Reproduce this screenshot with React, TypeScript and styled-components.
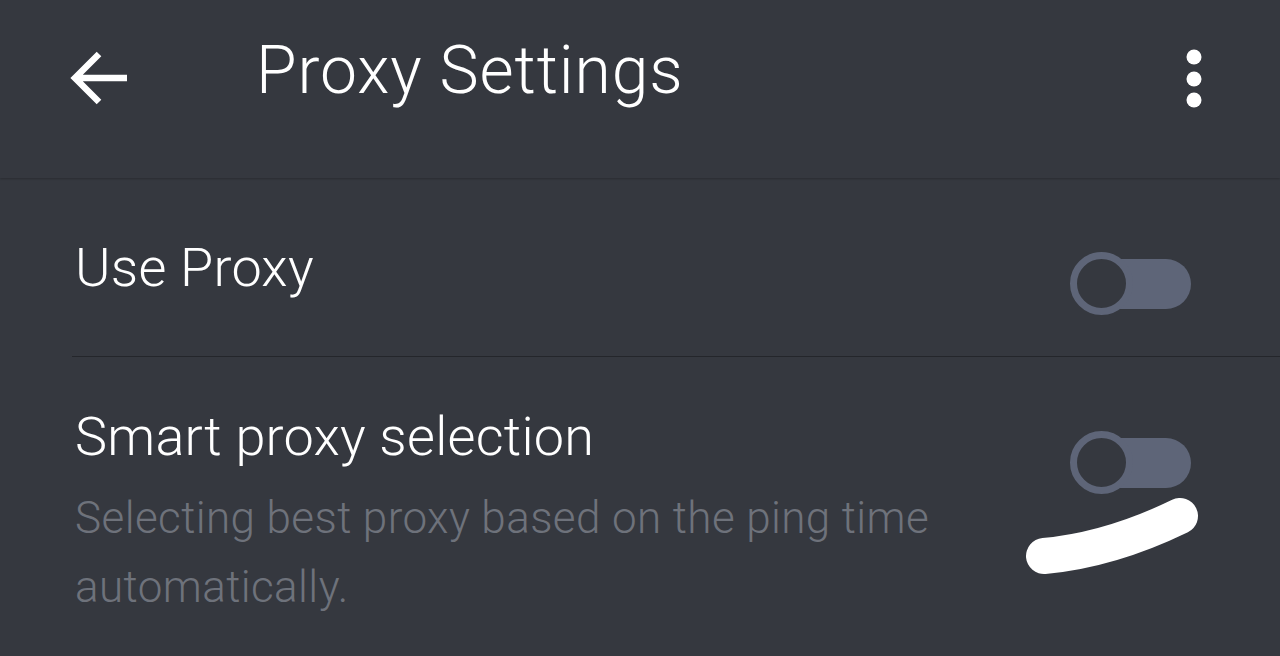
import React from "react";
import styled, { createGlobalStyle } from "styled-components";

const Global = createGlobalStyle`
  html, body { margin: 0; padding: 0; background: #35383f; overflow: hidden; }
  * { box-sizing: border-box; }
`;

const Page = styled.div`
  position: relative;
  width: 1280px;
  height: 656px;
  background: #35383f;
  font-family: Roboto, "Noto Sans", sans-serif;
  color: #ffffff;
  overflow: hidden;
`;

const Header = styled.header`
  height: 178px;
  display: flex;
  align-items: flex-start;
  padding: 0 76px 0 68px;
  box-shadow: 0 1px 2px rgba(0, 0, 0, 0.22);
  position: relative;
  z-index: 1;
`;

const IconButton = styled.div<{ $top: number }>`
  margin-top: ${(p) => p.$top}px;
  display: flex;
  align-items: center;
  justify-content: center;
`;

const Title = styled.h1`
  margin: 31px 0 0 124px;
  font-size: 66px;
  line-height: 80px;
  font-weight: 300;
  flex: 1;
  letter-spacing: 0.9px;
`;

const Row = styled.div<{ $top: number; $bottom: number; $divider?: boolean }>`
  margin-left: 72px;
  padding: ${(p) => p.$top}px 89px ${(p) => p.$bottom}px 3px;
  display: flex;
  align-items: flex-start;
  border-bottom: ${(p) => (p.$divider ? "1px solid #24262b" : "none")};
`;

const TextCol = styled.div`
  flex: 1;
  max-width: 920px;
`;

const RowTitle = styled.div`
  font-size: 54px;
  line-height: 64px;
  font-weight: 300;
  letter-spacing: 0.25px;
  color: #ffffff;
`;

const RowSub = styled.div`
  margin-top: 15px;
  font-size: 44px;
  line-height: 69px;
  font-weight: 300;
  letter-spacing: 0.4px;
  color: #6e727b;
`;

const ToggleWrap = styled.div<{ $top: number }>`
  margin-left: auto;
  margin-top: ${(p) => p.$top}px;
  position: relative;
  width: 121px;
  height: 63px;
`;

const Track = styled.div`
  position: absolute;
  left: 20px;
  right: 0;
  top: 6.5px;
  height: 50px;
  border-radius: 25px;
  background: #5e6578;
`;

const Thumb = styled.div`
  position: absolute;
  left: 0;
  top: 0;
  width: 63px;
  height: 63px;
  border-radius: 50%;
  border: 7px solid #5e6578;
  background: #35383f;
`;

const Scribble = styled.svg`
  position: absolute;
  left: 0;
  top: 0;
  pointer-events: none;
`;

const Toggle = ({ top }: { top: number }) => (
  <ToggleWrap $top={top}>
    <Track />
    <Thumb />
  </ToggleWrap>
);

export default function App() {
  return (
    <Page>
      <Global />
      <Header>
        <IconButton $top={46}>
          <svg width="64" height="64" viewBox="0 0 64 64">
            <path
              d="M59 32 H7 M31 8 L7 32 L31 56"
              fill="none"
              stroke="#ffffff"
              strokeWidth="6.5"
              strokeLinecap="butt"
              strokeLinejoin="miter"
            />
          </svg>
        </IconButton>
        <Title>Proxy Settings</Title>
        <IconButton $top={48}>
          <svg width="20" height="62" viewBox="0 0 20 62">
            <circle cx="10" cy="9" r="7.5" fill="#ffffff" />
            <circle cx="10" cy="31" r="7.5" fill="#ffffff" />
            <circle cx="10" cy="52" r="7.5" fill="#ffffff" />
          </svg>
        </IconButton>
      </Header>
      <Row $top={58} $bottom={41} $divider>
        <TextCol>
          <RowTitle>Use Proxy</RowTitle>
        </TextCol>
        <Toggle top={16} />
      </Row>
      <Row $top={48} $bottom={0}>
        <TextCol>
          <RowTitle>Smart proxy selection</RowTitle>
          <RowSub>
            Selecting best proxy based on the ping time automatically.
          </RowSub>
        </TextCol>
        <Toggle top={26} />
      </Row>
      <Scribble width="1280" height="656" viewBox="0 0 1280 656">
        <path
          d="M1044 556 Q1110 550 1180 516"
          fill="none"
          stroke="#ffffff"
          strokeWidth="36"
          strokeLinecap="round"
        />
      </Scribble>
    </Page>
  );
}
